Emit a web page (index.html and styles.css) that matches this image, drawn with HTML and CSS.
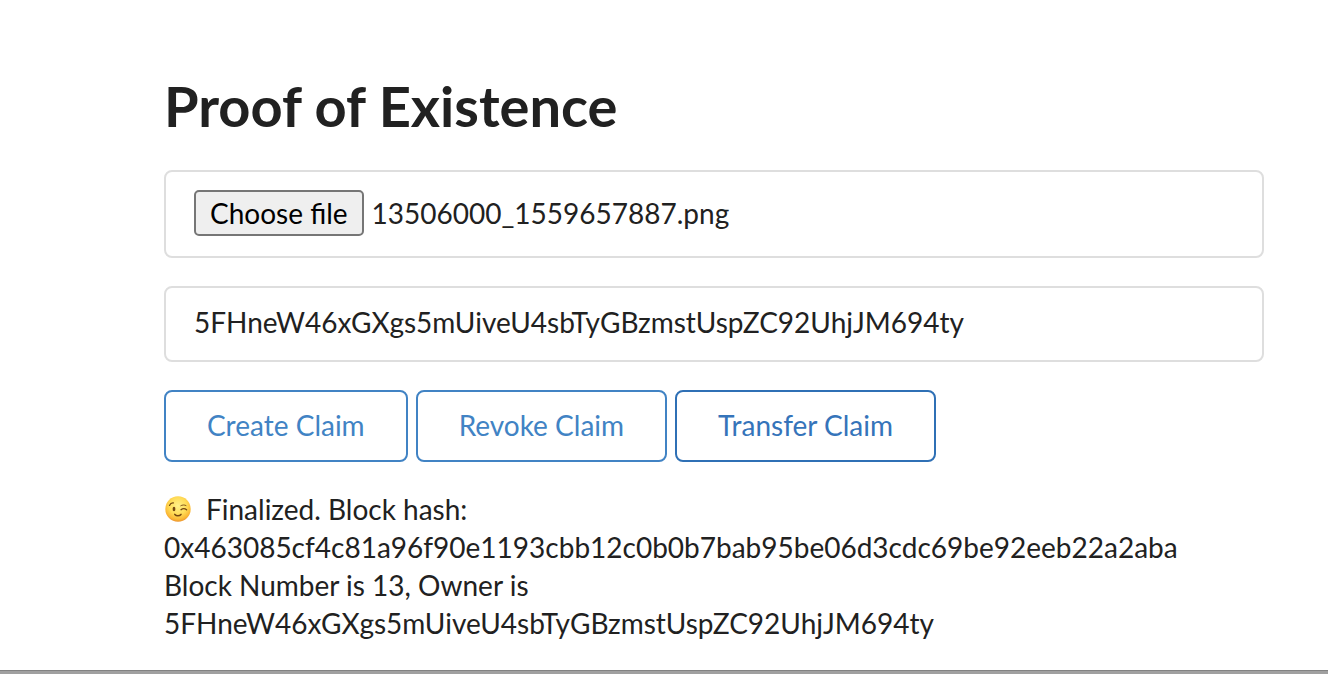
FILE: index.html
```html
<!DOCTYPE html>
<html lang="en">
<head>
<meta charset="utf-8">
<title>Proof of Existence</title>
<link rel="stylesheet" href="styles.css">
</head>
<body>
<main class="page">
  <h1 class="title">Proof of Existence</h1>
  <form class="form">
    <div class="field file-field">
      <input class="file-input" type="file" id="file">
      <label class="file-button" for="file">Choose file</label>
      <span class="file-name">13506000_1559657887.png</span>
    </div>
    <input class="field text-field" type="text" aria-label="Receiver address" value="5FHneW46xGXgs5mUiveU4sbTyGBzmstUspZC92UhjJM694ty">
    <div class="actions">
      <button class="button" type="button">Create Claim</button>
      <button class="button" type="button">Revoke Claim</button>
      <button class="button button-active" type="button">Transfer Claim</button>
    </div>
  </form>
  <div class="status">
    <div class="status-line">
      <svg class="emoji" viewBox="0 0 26 26" role="img" aria-label="Winking face">
        <defs>
          <radialGradient id="face" cx="50%" cy="38%" r="62%">
            <stop offset="0" stop-color="#fff08a"/>
            <stop offset=".55" stop-color="#ffdc57"/>
            <stop offset=".85" stop-color="#fbb935"/>
            <stop offset="1" stop-color="#ec9530"/>
          </radialGradient>
        </defs>
        <circle cx="13" cy="13" r="12.7" fill="url(#face)"/>
        <g fill="none" stroke="#754711" stroke-linecap="round">
          <path d="M4.5 9.4C5.3 7.6 6.7 6.7 8.4 6.9" stroke-width="1.2"/>
          <path d="M15.8 9.7C17.3 8.8 19.4 8.7 21 9.5" stroke-width=".9"/>
          <path d="M16 13.7C17.6 12.4 20 12.4 21.6 13.8" stroke-width="1.3"/>
          <path d="M9.8 18.4C11.4 20.3 14.4 20.3 16 18.4" stroke-width="1.5"/>
        </g>
        <ellipse cx="9" cy="13" rx="1.4" ry="2.3" fill="#754711"/>
      </svg>
      <span>Finalized. Block hash:</span>
    </div>
    <div>0x463085cf4c81a96f90e1193cbb12c0b0b7bab95be06d3cdc69be92eeb22a2aba</div>
    <div>Block Number is 13, Owner is</div>
    <div>5FHneW46xGXgs5mUiveU4sbTyGBzmstUspZC92UhjJM694ty</div>
  </div>
</main>
<div class="bottom-bar"></div>
</body>
</html>
```
FILE: styles.css
```css
* {
  box-sizing: border-box;
}

body {
  margin: 0;
  min-height: 100vh;
  display: flex;
  flex-direction: column;
  background: #fff;
  color: #212121;
  font-family: Lato, "Liberation Sans", sans-serif;
  font-size: 28px;
  line-height: 38px;
}

.page {
  flex: 1;
  padding: 70px 64px 24px 164px;
}

.title {
  margin: 0 0 28px;
  font-size: 56px;
  line-height: 72px;
  font-weight: 700;
}

.form {
  display: flex;
  flex-direction: column;
  gap: 28px;
}

.field {
  width: 100%;
  padding: 18px 28px;
  border: 2px solid #dedede;
  border-radius: 8px;
  background: #fff;
}

.file-field {
  position: relative;
  display: flex;
  align-items: center;
  gap: 8px;
  padding-bottom: 20px;
  line-height: 34px;
}

.file-input {
  position: absolute;
  width: 1px;
  height: 1px;
  opacity: 0;
}

.file-button {
  padding: 4px 14px;
  border: 2px solid #767676;
  border-radius: 5px;
  background: #efefef;
  color: #000;
  cursor: pointer;
}

.text-field {
  height: 76px;
  padding: 16px 28px 20px;
  color: inherit;
  font: inherit;
}

.actions {
  display: flex;
  gap: 8px;
}

.button {
  padding: 14px 41px 16px;
  border: 2px solid #4183c4;
  border-radius: 8px;
  background: #fff;
  color: #4183c4;
  font: inherit;
  cursor: pointer;
}

.button-active {
  border-color: #2f70b5;
  color: #3574ba;
}

.status {
  margin-top: 28px;
}

.status-line {
  display: flex;
  align-items: center;
  gap: 14px;
}

.emoji {
  width: 28px;
  height: 26px;
}

.bottom-bar {
  height: 4px;
  border-top: 1px solid #828282;
  background: #a0a0a0;
}
```
